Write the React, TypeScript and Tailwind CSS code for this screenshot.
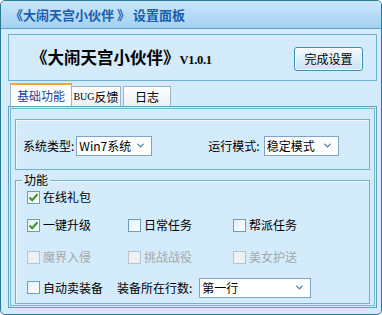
import { ChevronDown } from "lucide-react";

const cjk = "font-['Noto_Sans_CJK_SC','Noto_Sans',sans-serif]";

function Check({ checked, disabled }: { checked?: boolean; disabled?: boolean }) {
  return (
    <span
      className={
        "grid h-[13px] w-[13px] shrink-0 place-items-center border " +
        (disabled
          ? "border-[#b9c3cb] bg-[#eef1f3]"
          : "border-[#6e9dbd] bg-gradient-to-br from-[#e4eef5] to-white")
      }
    >
      {checked && (
        <svg width="11" height="11" viewBox="0 0 11 11">
          <path d="M1.5 5.5 L4.2 8.2 L9.5 2.2" fill="none" stroke="#3f9a2e" strokeWidth="2.2" />
        </svg>
      )}
    </span>
  );
}

function Option({ label, checked, disabled }: { label: string; checked?: boolean; disabled?: boolean }) {
  return (
    <label className={"flex items-center gap-[3px] text-[12px] " + (disabled ? "text-[#a3a9ad]" : "text-black")}>
      <Check checked={checked} disabled={disabled} />
      <span>{label}</span>
    </label>
  );
}

function Select({ value, width }: { value: string; width: string }) {
  return (
    <div className={"flex h-[20px] items-center justify-between border border-[#7ea6c4] bg-white pl-[2px] pr-[5px] text-[12px] " + width}>
      <span>{value}</span>
      <ChevronDown className="h-[11px] w-[11px] text-[#4f82b3]" strokeWidth={3} />
    </div>
  );
}

export default function App() {
  return (
    <div className={"flex h-[315px] w-[382px] flex-col overflow-hidden rounded-[5px] border border-[#2a7896] bg-[#d4ebfb] " + cjk}>
      <div className="flex h-[28px] shrink-0 items-center border-b border-[#5fa5c2] bg-gradient-to-b from-[#cae6fa] to-[#a3d1f3] pl-[9px] text-[13px] font-bold text-[#1b5eb0]">
        《大闹天宫小伙伴 》&nbsp;设置面板
      </div>

      <div className="flex flex-1 flex-col pl-[7px] pr-[4px] pt-[5px] pb-[6px]">
        <div className="flex h-[47px] shrink-0 items-center justify-between border border-[#6fb0ca] pl-[22px] pr-[13px]">
          <div className="flex items-baseline">
            <span className="text-[16.5px] font-bold text-black">《大闹天宫小伙伴》</span>
            <span className="font-['Liberation_Serif',serif] text-[12.5px] font-bold tracking-[-0.3px] text-black">V1.0.1</span>
          </div>
          <button className="mt-[2px] flex h-[24px] w-[69px] items-center justify-center rounded-[3px] border border-[#3f8fb3] bg-gradient-to-b from-[#f4fafe] to-[#c9e3f5] text-[12px] text-black shadow-[inset_0_0_0_1px_#ffffff]">
            完成设置
          </button>
        </div>

        <div className="mt-[3px] flex h-[22px] shrink-0 items-end pl-[2px]">
          <div className="flex h-[23px] w-[62px] items-center justify-center border border-b-0 border-[#9fb5c4] border-t-[2px] border-t-[#f0a43a] bg-white text-[12px] text-[#1d3f9e]">
            基础功能
          </div>
          <div className="flex h-[20px] w-[49px] items-center justify-center border border-b-0 border-l-0 border-[#9fb5c4] bg-gradient-to-b from-white to-[#eaf0f4] text-[12px] text-black">
            <span className="font-['Liberation_Serif',serif] text-[10px]">BUG</span>反馈
          </div>
          <div className="ml-[2px] flex h-[20px] w-[48px] items-center justify-center border border-b-0 border-[#9fb5c4] bg-gradient-to-b from-white to-[#eaf0f4] text-[12px] text-black">
            日志
          </div>
        </div>

        <div className="flex flex-1 flex-col border border-[#5aa3c0] p-[1px]">
          <div className="flex flex-1 flex-col border border-[#7ab8d0] px-[4px] pt-[10px] pb-[1px]">
            <div className="flex h-[51px] shrink-0 items-center border border-[#6fb0ca] pl-[7px] pt-[2px] text-[12px] text-black shadow-[inset_1px_1px_0_#eef8ff]">
              <span className="mr-[2px]">系统类型:</span>
              <Select value="Win7系统" width="w-[76px]" />
              <span className="ml-[56px] mr-[4px]">运行模式:</span>
              <Select value="稳定模式" width="w-[75px]" />
            </div>

            <div className="relative mt-[10px] flex flex-1 flex-col border border-[#6fb0ca] pl-[11px] pt-[6px] shadow-[inset_1px_1px_0_#eef8ff]">
              <span className="absolute -top-[10px] left-[6px] bg-[#d4ebfb] px-[2px] text-[12px] text-black">功能</span>
              <div className="flex h-[20px] items-center">
                <Option label="在线礼包" checked />
              </div>
              <div className="mt-[8px] grid h-[20px] grid-cols-[101px_105px_1fr] items-center">
                <Option label="一键升级" checked />
                <Option label="日常任务" />
                <Option label="帮派任务" />
              </div>
              <div className="mt-[12px] grid h-[20px] grid-cols-[101px_105px_1fr] items-center">
                <Option label="魔界入侵" disabled />
                <Option label="挑战战役" disabled />
                <Option label="美女护送" disabled />
              </div>
              <div className="mt-[10px] flex h-[21px] items-center text-[12px]">
                <Option label="自动卖装备" />
                <span className="ml-[14px] mr-[7px]">装备所在行数:</span>
                <Select value="第一行" width="w-[112px]" />
              </div>
            </div>
          </div>
        </div>
      </div>
    </div>
  );
}
